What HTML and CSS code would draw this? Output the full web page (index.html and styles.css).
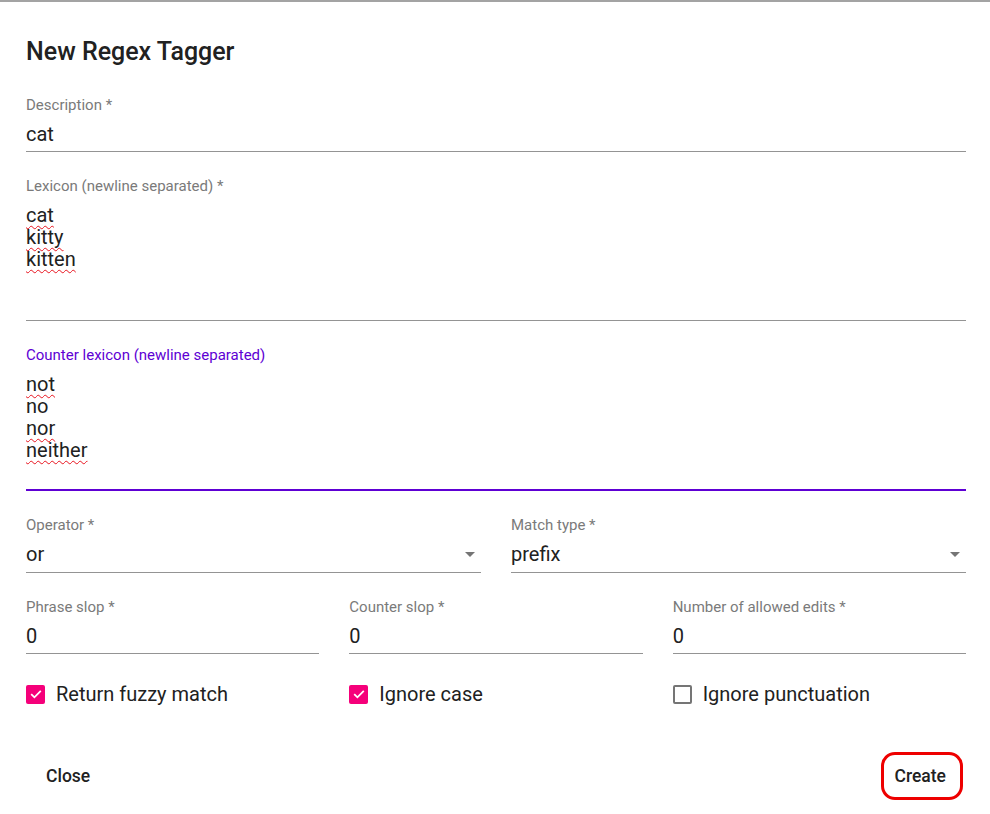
FILE: index.html
```html
<!DOCTYPE html>
<html>
<head>
<meta charset="utf-8">
<link rel="stylesheet" href="styles.css">
</head>
<body>
<div class="dialog">
  <h1 class="title">New Regex Tagger</h1>
  <div class="form">
    <div class="field">
      <div class="label">Description *</div>
      <div class="value">cat</div>
    </div>
    <div class="field">
      <div class="label">Lexicon (newline separated) *</div>
      <div class="value area"><span class="sp">cat</span><br><span class="sp">kitty</span><br><span class="sp">kitten</span></div>
    </div>
    <div class="field focused">
      <div class="label">Counter lexicon (newline separated)</div>
      <div class="value area"><span class="sp">not</span><br>no<br><span class="sp">nor</span><br><span class="sp">neither</span></div>
    </div>
    <div class="row two">
      <div class="field">
        <div class="label">Operator *</div>
        <div class="value select">or<span class="arrow"></span></div>
      </div>
      <div class="field">
        <div class="label">Match type *</div>
        <div class="value select">prefix<span class="arrow"></span></div>
      </div>
    </div>
    <div class="row three">
      <div class="field">
        <div class="label">Phrase slop *</div>
        <div class="value">0</div>
      </div>
      <div class="field">
        <div class="label">Counter slop *</div>
        <div class="value">0</div>
      </div>
      <div class="field">
        <div class="label">Number of allowed edits *</div>
        <div class="value">0</div>
      </div>
    </div>
    <div class="row three checks">
      <label class="check"><span class="box on"><svg viewBox="0 0 18 18" width="18" height="18"><path d="M4.2 9.2 L7.4 12.3 L13.8 5.9" fill="none" stroke="#fff" stroke-width="1.8"/></svg></span>Return fuzzy match</label>
      <label class="check"><span class="box on"><svg viewBox="0 0 18 18" width="18" height="18"><path d="M4.2 9.2 L7.4 12.3 L13.8 5.9" fill="none" stroke="#fff" stroke-width="1.8"/></svg></span>Ignore case</label>
      <label class="check"><span class="box off"></span>Ignore punctuation</label>
    </div>
  </div>
  <div class="actions">
    <button class="btn close">Close</button>
    <button class="btn create">Create</button>
  </div>
</div>
</body>
</html>
```
FILE: styles.css
```css
* { box-sizing: border-box; }
html, body { margin: 0; padding: 0; background: #fff; }
body {
  font-family: Roboto, "Liberation Sans", sans-serif;
  color: #212121;
  border-top: 2px solid #a3a3a3;
  height: 814px;
}
.dialog {
  padding: 34px 24px 0 26px;
}
.title {
  margin: 0;
  font-size: 25px;
  line-height: 32px;
  font-weight: 500;
  color: #212121;
}
.form {
  margin-top: 29px;
  display: flex;
  flex-direction: column;
  gap: 26px;
}
.field {
  display: flex;
  flex-direction: column;
  min-width: 0;
}
.label {
  font-size: 15px;
  line-height: 16px;
  color: #7a7a7a;
}
.value {
  margin-top: 10px;
  font-size: 20px;
  line-height: 22px;
  padding-bottom: 6px;
  border-bottom: 1px solid #949494;
  color: #212121;
  position: relative;
}
.area { height: 117px; }
.focused .label { color: #5e00d4; }
.focused .value { border-bottom: 2px solid #5e00d4; height: 118px; }
.sp {
  text-decoration: underline wavy #e8141f;
  text-decoration-thickness: 1px;
  text-underline-offset: 3px;
  text-decoration-skip-ink: none;
}
.select { padding-bottom: 7px; }
.arrow {
  position: absolute;
  right: 6px;
  top: 9px;
  width: 0;
  height: 0;
  border-left: 5px solid transparent;
  border-right: 5px solid transparent;
  border-top: 5px solid #757575;
}
.row { display: grid; gap: 30px; }
.two { grid-template-columns: 1fr 1fr; }
.three { grid-template-columns: 1fr 1fr 1fr; }
.checks { margin-top: 3px; }
.check {
  display: flex;
  align-items: center;
  gap: 11px;
  font-size: 20px;
  line-height: 22px;
  color: #212121;
}
.box {
  width: 19px;
  height: 19px;
  border-radius: 2px;
  flex: none;
  display: flex;
  align-items: center;
  justify-content: center;
}
.box.on { background: #f5007a; }
.box.off { border: 2px solid #757575; }
.actions {
  margin-top: 47px;
  display: flex;
  justify-content: space-between;
  align-items: center;
}
.btn {
  font-family: Roboto, "Liberation Sans", sans-serif;
  font-size: 17.5px;
  font-weight: 500;
  color: #212121;
  background: #fff;
  border: 0;
  padding: 0 20px;
  height: 48px;
  line-height: 48px;
}
.create {
  border: 3px solid #ee0000;
  border-radius: 14px;
  padding: 0 14px 0 11px;
  line-height: 42px;
  margin-right: 3px;
}
```
